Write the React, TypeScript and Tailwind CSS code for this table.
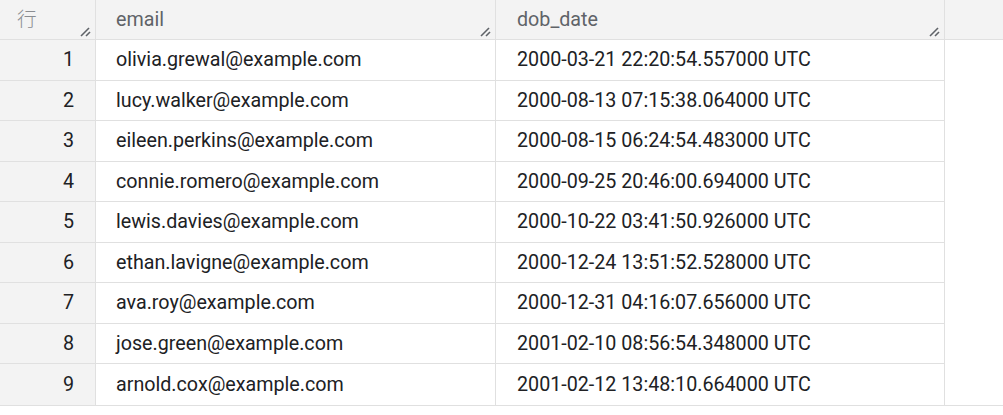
const rows = [
  ["olivia.grewal@example.com", "2000-03-21 22:20:54.557000 UTC"],
  ["lucy.walker@example.com", "2000-08-13 07:15:38.064000 UTC"],
  ["eileen.perkins@example.com", "2000-08-15 06:24:54.483000 UTC"],
  ["connie.romero@example.com", "2000-09-25 20:46:00.694000 UTC"],
  ["lewis.davies@example.com", "2000-10-22 03:41:50.926000 UTC"],
  ["ethan.lavigne@example.com", "2000-12-24 13:51:52.528000 UTC"],
  ["ava.roy@example.com", "2000-12-31 04:16:07.656000 UTC"],
  ["jose.green@example.com", "2001-02-10 08:56:54.348000 UTC"],
  ["arnold.cox@example.com", "2001-02-12 13:48:10.664000 UTC"],
]

function Grip() {
  return (
    <svg width="12" height="10" viewBox="0 0 12 10" className="absolute right-[3px] bottom-[2px]">
      <path d="M1 9 L9 1" stroke="#5f6368" strokeWidth="1.6" />
      <path d="M6 9 L10 5" stroke="#5f6368" strokeWidth="1.6" />
    </svg>
  )
}

export default function App() {
  return (
    <div className="w-[1003px] h-[415px] bg-white text-[19.7px] font-['Roboto','Noto_Sans_CJK_JP',sans-serif] text-[#202124]">
      {/* header */}
      <div className="flex h-[40px] bg-[#f3f3f3] border-b border-[#e0e0e0]">
        <div className="relative w-[96px] border-r border-[#e0e0e0] pl-[17px] pt-[5px] font-light text-[#8a8d91]">
          行
          <Grip />
        </div>
        <div className="relative w-[400px] border-r border-[#e0e0e0] pl-[20px] pt-[5px] text-[#5f6368]">
          email
          <Grip />
        </div>
        <div className="relative w-[449px] border-r border-[#e0e0e0] pl-[21px] pt-[5px] text-[#5f6368]">
          dob_date
          <Grip />
        </div>
        <div className="flex-1" />
      </div>

      {/* body */}
      <div className="flex border-b border-[#e0e0e0]">
        <div className="w-[945px]">
          {rows.map((r, i) => (
            <div
              key={i}
              className={"flex h-[40.56px] items-center " + (i < rows.length - 1 ? "border-b border-[#e0e0e0]" : "")}
            >
              <div className="w-[96px] h-full flex items-center justify-end pr-[21px] bg-[#f3f3f3] border-r border-[#e0e0e0]">
                {i + 1}
              </div>
              <div className="w-[400px] h-full flex items-center pl-[20px] border-r border-[#e0e0e0]">{r[0]}</div>
              <div className="w-[449px] h-full flex items-center pl-[21px] border-r border-[#e0e0e0]">{r[1]}</div>
            </div>
          ))}
        </div>
        <div className="flex-1" />
      </div>
    </div>
  )
}
